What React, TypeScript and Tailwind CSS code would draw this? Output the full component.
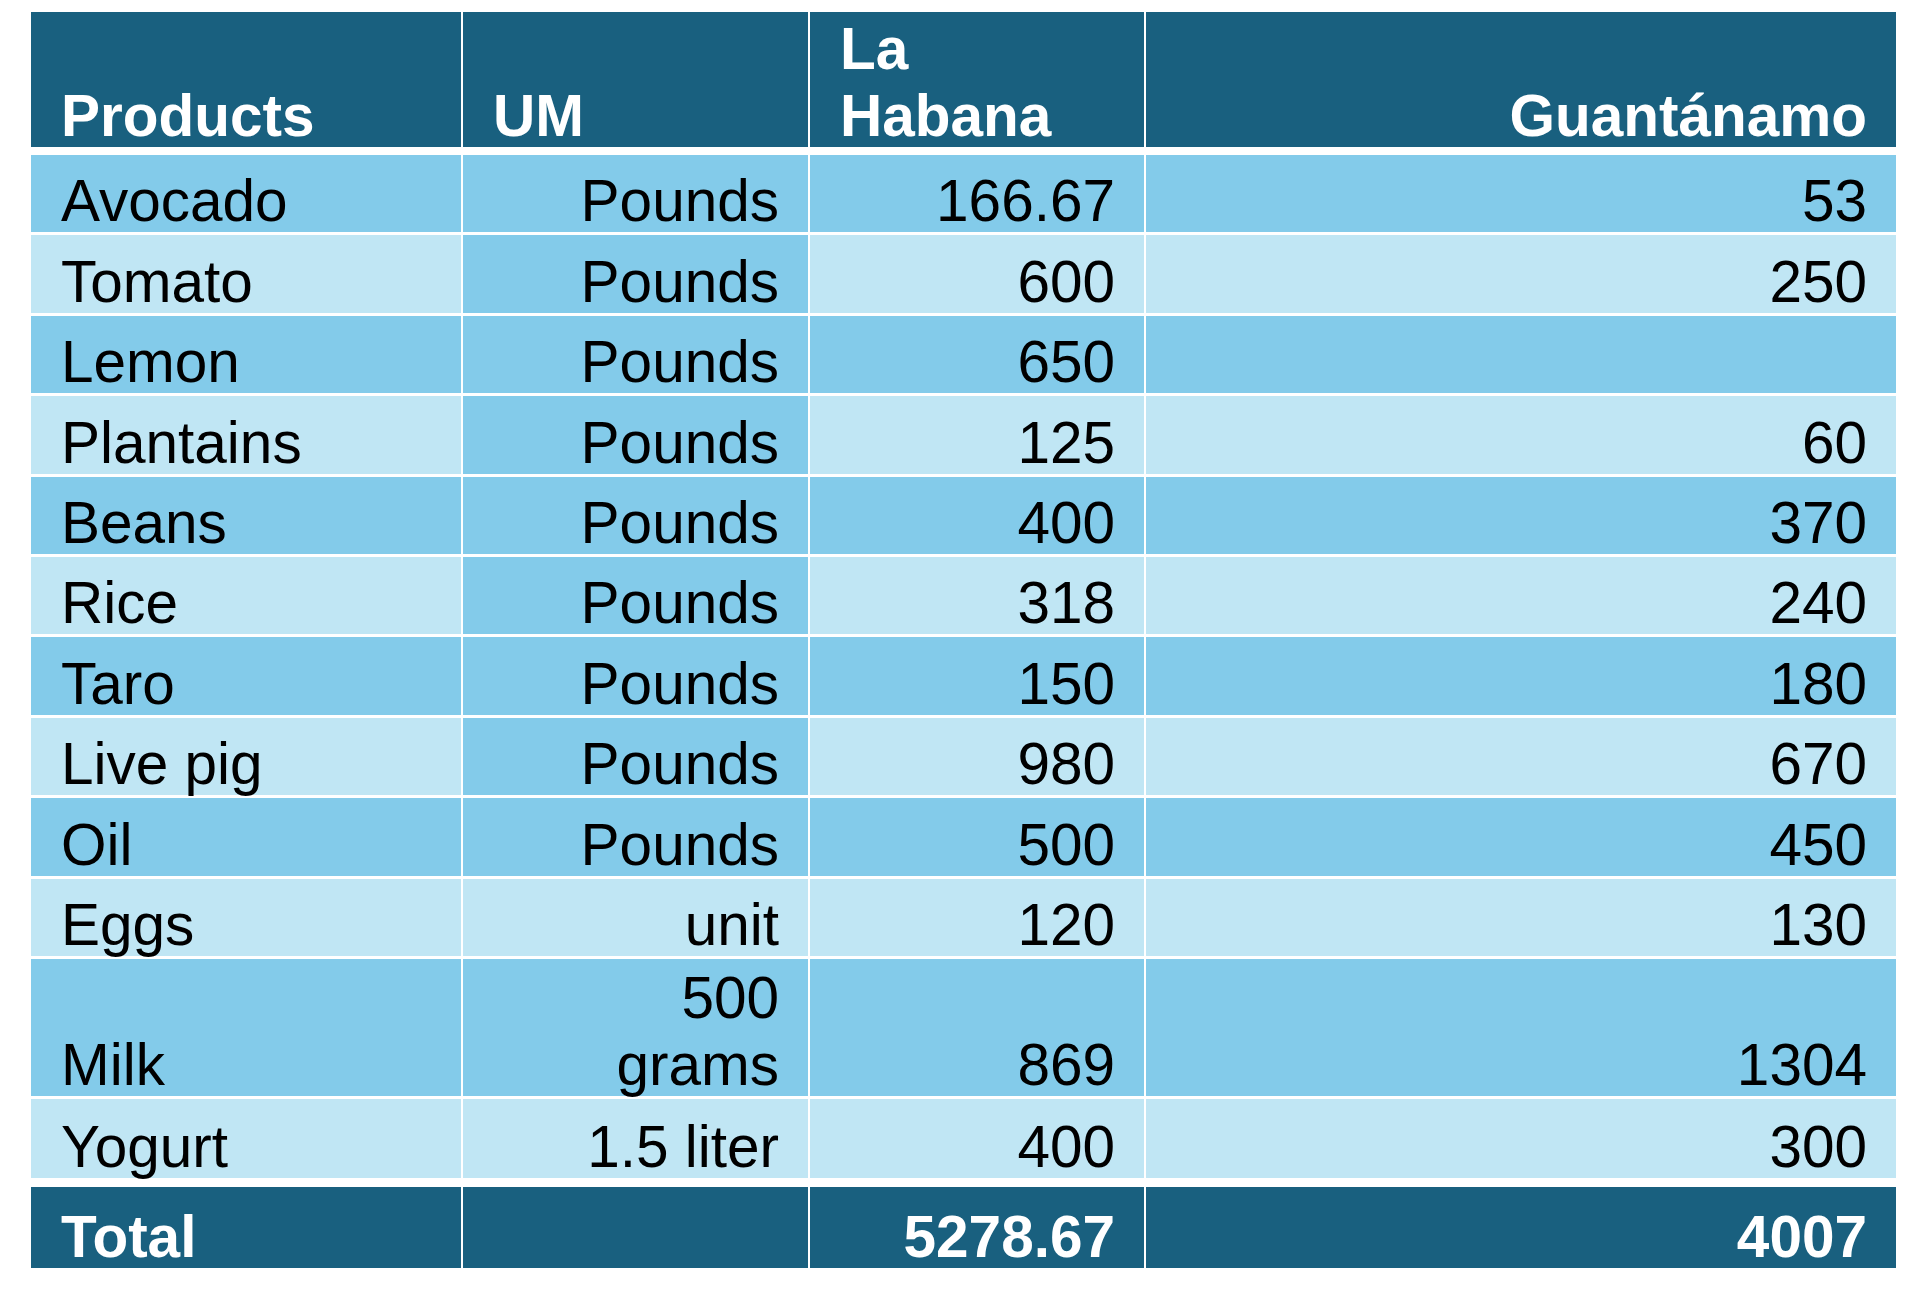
import React from "react";

type Row = {
  product: string;
  um: React.ReactNode;
  habana: string;
  guantanamo: string;
  umLight?: boolean;
  tall?: boolean;
};

const ROWS: Row[] = [
  { product: "Avocado", um: "Pounds", habana: "166.67", guantanamo: "53" },
  { product: "Tomato", um: "Pounds", habana: "600", guantanamo: "250" },
  { product: "Lemon", um: "Pounds", habana: "650", guantanamo: "" },
  { product: "Plantains", um: "Pounds", habana: "125", guantanamo: "60" },
  { product: "Beans", um: "Pounds", habana: "400", guantanamo: "370" },
  { product: "Rice", um: "Pounds", habana: "318", guantanamo: "240" },
  { product: "Taro", um: "Pounds", habana: "150", guantanamo: "180" },
  { product: "Live pig", um: "Pounds", habana: "980", guantanamo: "670" },
  { product: "Oil", um: "Pounds", habana: "500", guantanamo: "450" },
  { product: "Eggs", um: "unit", habana: "120", guantanamo: "130", umLight: true },
  {
    product: "Milk",
    um: (
      <>
        500
        <br />
        grams
      </>
    ),
    habana: "869",
    guantanamo: "1304",
    tall: true,
  },
  { product: "Yogurt", um: "1.5 liter", habana: "400", guantanamo: "300", umLight: true },
];

const COLS = "grid grid-cols-[430px_345px_334px_750px] gap-x-[2px]";
const DARK = "bg-[#83cbea]";
const LIGHT = "bg-[#c0e6f4]";
const HEAD = "bg-[#19607f] text-white font-bold";

function Cell({
  className,
  right,
  children,
}: {
  className: string;
  right?: boolean;
  children?: React.ReactNode;
}) {
  return (
    <div
      className={`flex items-end pl-[30px] pr-[29px] ${right ? "justify-end text-right" : "justify-start text-left"} ${className}`}
    >
      <div className="-mb-[2px]">{children}</div>
    </div>
  );
}

export default function App() {
  return (
    <div className="w-[1920px] h-[1296px] bg-white pt-[12px] pl-[31px] font-['Liberation_Sans',Arial,sans-serif] text-[58.5px] leading-[67px] text-black">
      <div className="flex flex-col w-[1865px]">
        {/* header */}
        <div className={`${COLS} h-[135px]`}>
          <Cell className={HEAD}>Products</Cell>
          <Cell className={HEAD}>UM</Cell>
          <Cell className={HEAD}>
            La
            <br />
            Habana
          </Cell>
          <Cell className={HEAD} right>
            Guantánamo
          </Cell>
        </div>

        <div className="mt-[8px] flex flex-col gap-y-[3px]">
          {ROWS.map((row, i) => {
            const band = i % 2 === 0 ? DARK : LIGHT;
            const umBg = row.umLight ? LIGHT : DARK;
            const h = row.tall ? "h-[137px]" : row.product === "Yogurt" ? "h-[79px]" : "h-[77.4px]";
            return (
              <div key={row.product} className={`${COLS} ${h}`}>
                <Cell className={band}>{row.product}</Cell>
                <Cell className={umBg} right>
                  {row.um}
                </Cell>
                <Cell className={band} right>
                  {row.habana}
                </Cell>
                <Cell className={band} right>
                  {row.guantanamo}
                </Cell>
              </div>
            );
          })}
        </div>

        {/* total */}
        <div className={`${COLS} h-[81px] mt-[9px]`}>
          <Cell className={HEAD}>Total</Cell>
          <Cell className={HEAD} />
          <Cell className={HEAD} right>
            5278.67
          </Cell>
          <Cell className={HEAD} right>
            4007
          </Cell>
        </div>
      </div>
    </div>
  );
}
